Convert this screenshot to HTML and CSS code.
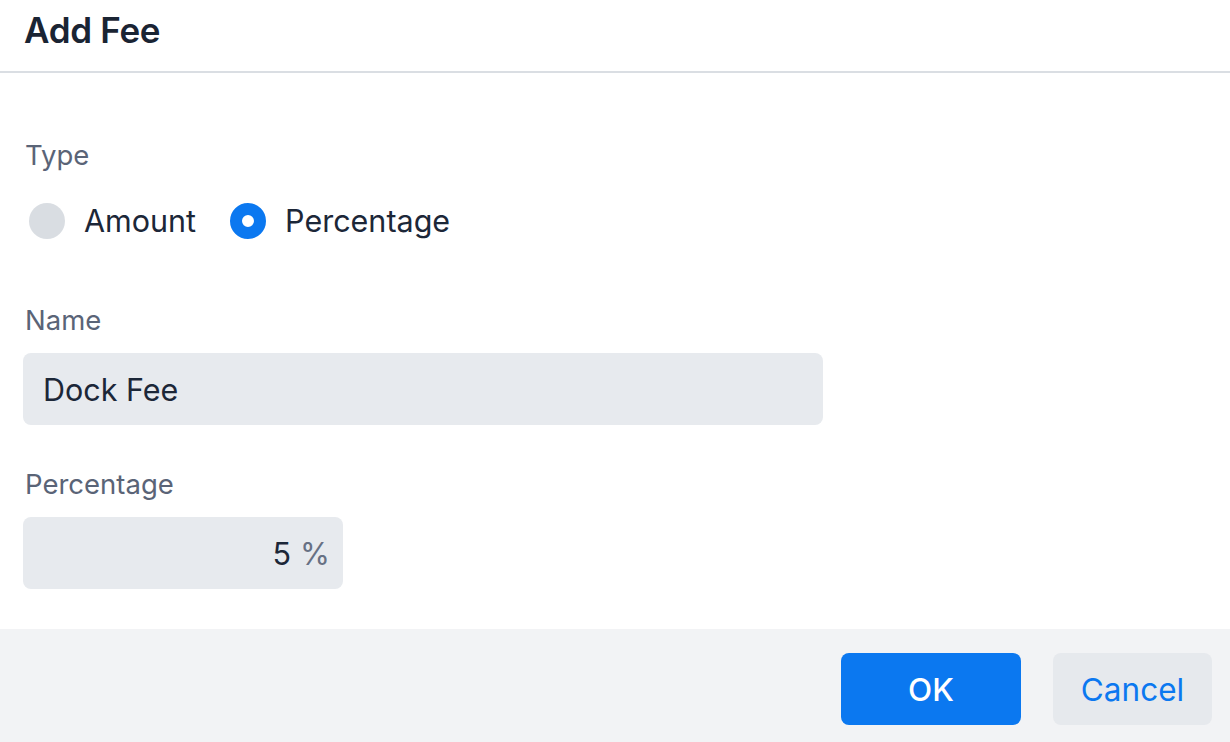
FILE: index.html
```html
<!DOCTYPE html>
<html lang="en">
<head>
  <meta charset="UTF-8" />
  <title>Add Fee</title>
  <link rel="stylesheet" href="styles.css">
</head>
<body>
  <div class="dialog">
    <div class="dialog-header">
      <h2>Add Fee</h2>
    </div>

    <form class="dialog-body" id="feeForm">
      <div class="field">
        <div class="field-label">Type</div>
        <div class="radio-row">
          <label class="radio">
            <span class="radio-dot"></span>
            <span>Amount</span>
          </label>
          <label class="radio checked">
            <span class="radio-dot"></span>
            <span>Percentage</span>
          </label>
        </div>
      </div>

      <div class="field">
        <div class="field-label">Name</div>
        <div class="text-input name-input">Dock Fee</div>
      </div>

      <div class="field">
        <div class="field-label">Percentage</div>
        <div class="text-input pct-input">
          <span class="pct-value">5</span>
          <span class="pct-unit">%</span>
        </div>
      </div>
    </form>

    <div class="dialog-footer">
      <button type="button" class="btn btn-primary">OK</button>
      <button type="button" class="btn btn-secondary">Cancel</button>
    </div>
  </div>
</body>
</html>
```

FILE: styles.css
```css
html, body {
  margin: 0;
  padding: 0;
  background: #fff;
}
body {
  font-family: Inter, 'Noto Sans', Arial, sans-serif;
  color: #1c2738;
}
.dialog {
  display: flex;
  flex-direction: column;
  height: 742px;
  overflow: hidden;
}
.dialog-header {
  flex: none;
  height: 73px;
  padding: 0 24px;
  border-bottom: 2px solid #dadee3;
  box-sizing: border-box;
}
.dialog-header h2 {
  margin: 0;
  padding-top: 9px;
  font-size: 35px;
  line-height: 42px;
  font-weight: 600;
  letter-spacing: -0.3px;
  color: #1a2433;
}
.dialog-body {
  flex: 1;
  margin: 0;
  padding: 66px 24px 0 23px;
}
.field {
  margin-bottom: 43px;
}
.field:first-child,
.field:last-child {
  margin-bottom: 0;
}
.field-label {
  font-size: 27.5px;
  line-height: 32px;
  color: #5a6477;
  padding-left: 2px;
  margin-bottom: 17px;
}
.field:first-child .field-label {
  margin-bottom: 0;
}
.radio-row {
  display: flex;
  gap: 34px;
  padding-left: 6px;
  margin: 32px 0 65px;
}
.radio {
  display: flex;
  align-items: center;
  gap: 19px;
  font-size: 30.5px;
  line-height: 36px;
  color: #1c2738;
}
.radio-dot {
  width: 36px;
  height: 36px;
  border-radius: 50%;
  background: #d9dde2;
  box-sizing: border-box;
}
.radio.checked .radio-dot {
  background: #fff;
  border: 12px solid #0b78f0;
}
.text-input {
  height: 72px;
  background: #e7eaee;
  border-radius: 8px;
  box-sizing: border-box;
  display: flex;
  align-items: center;
  font-size: 30.5px;
}
.name-input {
  width: 800px;
  padding-left: 20px;
}
.pct-input {
  width: 320px;
  justify-content: flex-end;
  padding-right: 13px;
  gap: 9px;
}
.pct-unit {
  color: #677184;
}
.dialog-footer {
  flex: none;
  height: 113px;
  box-sizing: border-box;
  background: #f2f3f5;
  display: flex;
  justify-content: flex-end;
  align-items: flex-start;
  gap: 32px;
  padding: 24px 18px 0;
}
.btn {
  height: 72px;
  border: none;
  border-radius: 8px;
  font-family: inherit;
  font-size: 31.5px;
  cursor: pointer;
}
.btn-primary {
  width: 180px;
  background: #0b78f0;
  color: #fff;
  font-weight: 500;
}
.btn-secondary {
  width: 159px;
  background: #e6e9ed;
  color: #0b78f0;
  font-weight: 400;
}
```
